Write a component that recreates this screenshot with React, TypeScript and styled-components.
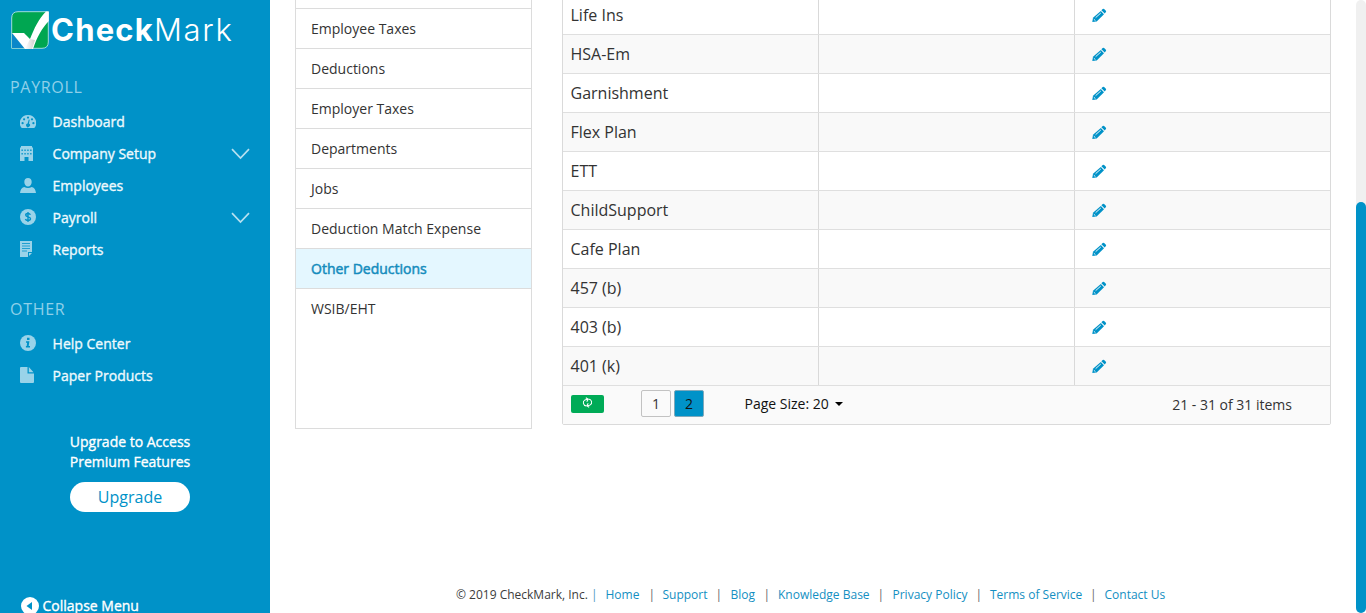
import React from "react";
import styled, { createGlobalStyle } from "styled-components";

const BLUE = "#0092c8";

const GlobalStyle = createGlobalStyle`
  *, *::before, *::after { box-sizing: border-box; }
  html, body { margin: 0; padding: 0; height: 613px; overflow: hidden; background: #fff; }
  body { font-family: "Open Sans", "Noto Sans", sans-serif; color: #333; }
`;

const Page = styled.div`
  display: flex;
  height: 613px;
  overflow: hidden;
`;

const Sidebar = styled.aside`
  flex: 0 0 270px;
  display: flex;
  flex-direction: column;
  background: ${BLUE};
  color: #fff;
  overflow: hidden;
`;

const Brand = styled.div`
  display: flex;
  align-items: center;
  height: 60px;
  padding: 0 0 1px 11px;
  flex: none;
`;

const BrandText = styled.div`
  margin-top: 1px;
  font-family: Inter, "Open Sans", sans-serif;
  font-size: 31px;
  line-height: 38px;
  white-space: nowrap;
`;

const BrandStrong = styled.span`
  font-weight: 700;
  letter-spacing: 1.2px;
`;

const BrandLight = styled.span`
  font-weight: 300;
  letter-spacing: 1.7px;
`;

const Section = styled.div<{ $top: number }>`
  margin-top: ${(p) => p.$top}px;
  flex: none;
`;

const SectionTitle = styled.div`
  height: 24px;
  line-height: 24px;
  padding-left: 10px;
  margin-bottom: 6px;
  font-size: 16px;
  letter-spacing: 0.7px;
  color: #8fd0e9;
`;

const NavItem = styled.div`
  display: flex;
  align-items: center;
  height: 32px;
  padding: 0 20px;
  font-size: 14px;
`;

const NavIcon = styled.span`
  flex: 0 0 32.6px;
  display: flex;
  color: #99d3e9;
`;

const NavLabel = styled.span`
  flex: 1;
  padding-top: 2px;
  line-height: 20px;
  color: #eef9fd;
  -webkit-text-stroke: 0.35px currentColor;
`;

const UpgradeBox = styled.div`
  display: flex;
  flex-direction: column;
  align-items: center;
  width: 260px;
  margin-top: 41px;
  flex: none;
`;

const UpgradeText = styled.div`
  font-size: 14px;
  line-height: 20px;
  text-align: center;
  -webkit-text-stroke: 0.35px currentColor;
`;

const UpgradeButton = styled.button`
  margin-top: 10px;
  width: 120px;
  height: 30px;
  padding: 0;
  border: 0;
  border-radius: 15px;
  background: #fff;
  color: ${BLUE};
  font: 16px "Open Sans", sans-serif;
`;

const Collapse = styled.div`
  display: flex;
  align-items: center;
  margin-top: 84px;
  padding-left: 21px;
  height: 20px;
  gap: 3.5px;
  font-size: 14px;
  line-height: 16px;
  flex: none;
  -webkit-text-stroke: 0.35px currentColor;
`;

const Main = styled.main`
  flex: 1;
  display: flex;
  flex-direction: column;
  min-width: 0;
`;

const Columns = styled.div`
  display: flex;
  align-items: flex-start;
  gap: 30px;
  padding: 0 25px;
`;

const Menu = styled.nav`
  flex: 0 0 237px;
  height: 429px;
  border: 1px solid #dcdcdc;
  border-top: 0;
`;

const MenuSpacer = styled.div`
  height: 9px;
  border-bottom: 1px solid #dcdcdc;
`;

const MenuItem = styled.div<{ $active?: boolean; $last?: boolean }>`
  height: 40px;
  padding-left: 15px;
  font-size: 14px;
  line-height: 39px;
  border-bottom: 1px solid ${(p) => (p.$last ? "transparent" : "#dcdcdc")};
  background: ${(p) => (p.$active ? "#e4f7ff" : "transparent")};
  color: ${(p) => (p.$active ? "#158cbd" : "#333")};
  -webkit-text-stroke: ${(p) => (p.$active ? "0.5px currentColor" : "0")};
`;

const Grid = styled.section`
  flex: 0 0 769px;
  height: 430px;
  margin-top: -5px;
  border: 1px solid #dadada;
  border-radius: 2px;
`;

const GridRow = styled.div<{ $alt: boolean }>`
  display: grid;
  grid-template-columns: 256px 256px 255px;
  height: 39px;
  border-bottom: 1px solid #dfdfdf;
  background: ${(p) => (p.$alt ? "#f9f9f9" : "#fff")};
`;

const Cell = styled.div`
  display: flex;
  align-items: center;
  padding-left: 7.5px;
  font-size: 16px;
  line-height: 38px;
  border-right: 1px solid #d9d9d9;
`;

const ActionCell = styled.div`
  display: flex;
  align-items: center;
  padding: 1px 0 0 16.5px;
`;

const Pager = styled.div`
  display: flex;
  align-items: center;
  height: 38px;
  padding: 0 38px 0 8px;
  background: #fafafa;
  font-size: 14px;
`;

const RefreshButton = styled.span`
  display: flex;
  align-items: center;
  justify-content: center;
  width: 33px;
  height: 18px;
  padding-bottom: 3px;
  margin: 0 37px 2px 0;
  border-radius: 2px;
  background: #00ab57;
`;

const PageButton = styled.span<{ $current?: boolean }>`
  width: 30px;
  height: 27px;
  margin: 0 3px 3px 0;
  line-height: 25px;
  text-align: center;
  border: 1px solid ${(p) => (p.$current ? "#7fa9bb" : "#c2c2c2")};
  border-radius: 2px;
  background: ${(p) => (p.$current ? BLUE : "#fafafa")};
  color: ${(p) => (p.$current ? "#111" : "#333")};
`;

const PageSize = styled.span`
  display: flex;
  align-items: center;
  margin: 0 0 3px 37.5px;
  color: #111;
`;

const Caret = styled.span`
  width: 0;
  height: 0;
  margin-left: 6px;
  border: 4px solid transparent;
  border-top-color: #000;
  border-bottom: 0;
`;

const Count = styled.span`
  margin-left: auto;
  padding-bottom: 2px;
`;

const Footer = styled.footer`
  display: flex;
  margin-top: 156px;
  padding-left: 186px;
  height: 20px;
  font-size: 12px;
  line-height: 20px;
  white-space: nowrap;
`;

const FooterItem = styled.span`
  display: flex;
`;

const Copyright = styled.span`
  width: 135px;
  color: #3c3c3c;
`;

const FooterLink = styled.a<{ $w: number }>`
  width: ${(p) => p.$w}px;
  color: #148fc2;
`;

const Bar = styled.span<{ $w: number; $blue?: boolean }>`
  width: ${(p) => p.$w}px;
  color: ${(p) => (p.$blue ? "#4b9cc0" : "#666")};
`;

const ScrollTrack = styled.div`
  flex: 0 0 10px;
  height: 613px;
  padding-top: 202px;
  border-radius: 5px;
  background: #f0f0f0;
`;

const ScrollThumb = styled.div`
  height: 411px;
  border-radius: 5px;
  background: ${BLUE};
`;

const LogoMark = () => (
  <svg width="40" height="38" viewBox="0 0 40 38">
    <defs>
      <linearGradient id="fold" x1="0" y1="0" x2="1" y2="0">
        <stop offset="0" stopColor="#fff" />
        <stop offset="1" stopColor="#cfcfcf" />
      </linearGradient>
    </defs>
    <path d="M7 .7H37.300V31Q37.300 37.300 31 37.300H.7V7Q.7 .7 7 .7Z" fill="#00a651" stroke="#9fdcdf" strokeWidth="1" />
    <path d="M1 22L14 37H1Z" fill="#0b87c9" />
    <path d="M1 22H13L19 28C23 18 28 7 35 .5H37.800V10C31 17 26 26 22 38H14Z" fill="#fff" />
    <path d="M19 28L24 29L21 38H14Z" fill="url(#fold)" />
  </svg>
);

const DashboardIcon = () => (
  <svg width="16" height="14" viewBox="0 -1 16 14">
    <path d="M8 0a8 8 0 0 1 7 12.2q-.4.8-1.2.8H2.200q-.8 0-1.200-.8A8 8 0 0 1 8 0Z" fill="currentColor" />
    <g fill={BLUE}>
      <circle cx="8" cy="2.600" r="1.100" />
      <circle cx="4.100" cy="4.300" r="1.100" />
      <circle cx="2.600" cy="8.200" r="1.100" />
      <circle cx="12" cy="4.300" r="1.100" />
      <circle cx="13.400" cy="8.200" r="1.100" />
      <path d="M8.800 4.500l.9.200-.7 3.900a1.900 1.900 0 1 1-1.400-.2Z" />
    </g>
  </svg>
);

const BuildingIcon = () => (
  <svg width="13" height="16" viewBox="0 -1 13 16">
    <path d="M1 0H12V1.500H13V15H8.500V11H4.500V15H0V1.500H1Z" fill="currentColor" />
    <path d="M1.500 3.500h1.300v1.500H1.500zM4.400 3.500h1.300v1.500H4.400zM7.300 3.500h1.300v1.500H7.300zM10.200 3.500h1.300v1.500h-1.300zM1.500 7h1.300v1.500H1.500zM4.400 7h1.300v1.500H4.400zM7.300 7h1.300v1.500H7.300zM10.200 7h1.300v1.500h-1.300z" fill={BLUE} />
  </svg>
);

const PersonIcon = () => (
  <svg width="16" height="16" viewBox="0 -1 16 16">
    <path d="M8 0C10.300 0 11.700 1.600 11.700 4S10 8.600 8 8.600 4.300 6.400 4.300 4 5.700 0 8 0ZM4.200 9Q8 11 11.800 9C14.500 9.800 15.500 11.500 16 15H0C.5 11.500 1.500 9.800 4.200 9Z" fill="currentColor" />
  </svg>
);

const DollarIcon = () => (
  <svg width="16" height="16" viewBox="0 0 16 16">
    <circle cx="8" cy="8" r="8" fill="currentColor" />
    <path d="M10.400 5.800C10 4.900 9.200 4.500 8 4.500C6.600 4.500 5.700 5.100 5.700 6.100C5.700 8.500 10.500 7.200 10.500 9.800C10.500 10.900 9.500 11.500 8 11.500C6.600 11.500 5.700 11 5.400 10M8 3V13" fill="none" stroke={BLUE} strokeWidth="1.400" />
  </svg>
);

const ReportIcon = () => (
  <svg width="13" height="16" viewBox="0 0 13 16">
    <path d="M0 0H12V11H8V16H0ZM9 12H12L9 15Z" fill="currentColor" />
    <path d="M2 2.500H10M2 5H10M2 7.500H10M2 10H7" stroke={BLUE} strokeWidth=".8" />
  </svg>
);

const InfoIcon = () => (
  <svg width="16" height="16" viewBox="0 0 16 16">
    <circle cx="8" cy="8" r="8" fill="currentColor" />
    <path d="M7 2.800H9.500V5H7ZM6 6.300H9.400L8.700 11H10V12.600H5.900V11H6.700L7.100 7.800H6Z" fill={BLUE} />
  </svg>
);

const FileIcon = () => (
  <svg width="14" height="16" viewBox="0 0 14 16">
    <path d="M1 0H7.500V6.500H14V15Q14 16 13 16H1Q0 16 0 15V1Q0 0 1 0ZM8.800 0L13.500 5.200H8.800Z" fill="currentColor" />
  </svg>
);

const Chevron = () => (
  <svg width="19" height="14" viewBox="0 -2 19 14">
    <path d="M1 1.200L9.500 10L18 1.200" fill="none" stroke="#b5e0f0" strokeWidth="1.700" />
  </svg>
);

const CollapseIcon = () => (
  <svg width="18" height="18" viewBox="0 0 18 18">
    <circle cx="9" cy="9" r="9" fill="#fff" />
    <path d="M11 5V13L5.500 9Z" fill={BLUE} />
  </svg>
);

const PencilIcon = () => (
  <svg width="15" height="15" viewBox="0 0 15 15">
    <path d="M.3 14L1 9.800L8.800 2.900L12 6.300L4.700 13.500Z" fill={BLUE} />
    <path d="M9.400 2.200L10.700 1Q11.400.4 12.100 1L13.900 2.700Q14.400 3.400 13.900 4.100L12.700 5.500Z" fill={BLUE} />
    <path d="M1.800 11.200L3.500 12.800M3.600 9.700L8.800 5" stroke="#e6f4fb" strokeWidth="1" />
  </svg>
);

const RefreshIcon = () => (
  <svg width="11" height="11" viewBox="0 0 11 11" fill="none" stroke="#fff" strokeWidth="1">
    <g transform="rotate(-14 5.500 5.500)">
      <path d="M3.500 8.700C.5 7.300.7 3.200 3.500 2.500H6.500M5 .5L7 2.500L5 4.500" />
      <path d="M7.500 2.300C10.500 3.700 10.300 7.800 7.500 8.500H4.500M6 6.500L4 8.500L6 10.500" />
    </g>
  </svg>
);

const payroll = [
  { label: "Dashboard", icon: <DashboardIcon /> },
  { label: "Company Setup", icon: <BuildingIcon />, open: true },
  { label: "Employees", icon: <PersonIcon /> },
  { label: "Payroll", icon: <DollarIcon />, open: true },
  { label: "Reports", icon: <ReportIcon /> },
];

const other = [
  { label: "Help Center", icon: <InfoIcon /> },
  { label: "Paper Products", icon: <FileIcon /> },
];

const menu = ["Employee Taxes", "Deductions", "Employer Taxes", "Departments", "Jobs", "Deduction Match Expense", "Other Deductions", "WSIB/EHT"];

const rows = ["Life Ins", "HSA-Em", "Garnishment", "Flex Plan", "ETT", "ChildSupport", "Cafe Plan", "457 (b)", "403 (b)", "401 (k)"];

const links = [
  { label: "Home", width: 43, bar: 14 },
  { label: "Support", width: 53, bar: 15 },
  { label: "Blog", width: 33, bar: 14.5 },
  { label: "Knowledge Base", width: 99.5, bar: 15 },
  { label: "Privacy Policy", width: 83, bar: 14.5 },
  { label: "Terms of Service", width: 100, bar: 14.5 },
  { label: "Contact Us", width: 70, bar: 0 },
];

export default function App() {
  return (
    <Page>
      <GlobalStyle />
      <Sidebar>
        <Brand>
          <LogoMark />
          <BrandText>
            <BrandStrong>Check</BrandStrong>
            <BrandLight>Mark</BrandLight>
          </BrandText>
        </Brand>
        <Section $top={15}>
          <SectionTitle>PAYROLL</SectionTitle>
          {payroll.map((item) => (
            <NavItem key={item.label}>
              <NavIcon>{item.icon}</NavIcon>
              <NavLabel>{item.label}</NavLabel>
              {item.open && <Chevron />}
            </NavItem>
          ))}
        </Section>
        <Section $top={32}>
          <SectionTitle>OTHER</SectionTitle>
          {other.map((item) => (
            <NavItem key={item.label}>
              <NavIcon>{item.icon}</NavIcon>
              <NavLabel>{item.label}</NavLabel>
            </NavItem>
          ))}
        </Section>
        <UpgradeBox>
          <UpgradeText>
            Upgrade to Access
            <br />
            Premium Features
          </UpgradeText>
          <UpgradeButton>Upgrade</UpgradeButton>
        </UpgradeBox>
        <Collapse>
          <CollapseIcon />
          <span>Collapse Menu</span>
        </Collapse>
      </Sidebar>
      <Main>
        <Columns>
          <Menu>
            <MenuSpacer />
            {menu.map((label, i) => (
              <MenuItem key={label} $active={label === "Other Deductions"} $last={i === menu.length - 1}>
                {label}
              </MenuItem>
            ))}
          </Menu>
          <Grid>
            {rows.map((label, i) => (
              <GridRow key={label} $alt={i % 2 === 1}>
                <Cell>{label}</Cell>
                <Cell />
                <ActionCell>
                  <PencilIcon />
                </ActionCell>
              </GridRow>
            ))}
            <Pager>
              <RefreshButton>
                <RefreshIcon />
              </RefreshButton>
              <PageButton>1</PageButton>
              <PageButton $current>2</PageButton>
              <PageSize>
                Page Size: 20
                <Caret />
              </PageSize>
              <Count>21 - 31 of 31 items</Count>
            </Pager>
          </Grid>
        </Columns>
        <Footer>
          <Copyright>© 2019 CheckMark, Inc.</Copyright>
          <Bar $w={14.5} $blue>|</Bar>
          {links.map((link) => (
            <FooterItem key={link.label}>
              <FooterLink $w={link.width}>{link.label}</FooterLink>
              {link.bar > 0 && <Bar $w={link.bar}>|</Bar>}
            </FooterItem>
          ))}
        </Footer>
      </Main>
      <ScrollTrack>
        <ScrollThumb />
      </ScrollTrack>
    </Page>
  );
}
